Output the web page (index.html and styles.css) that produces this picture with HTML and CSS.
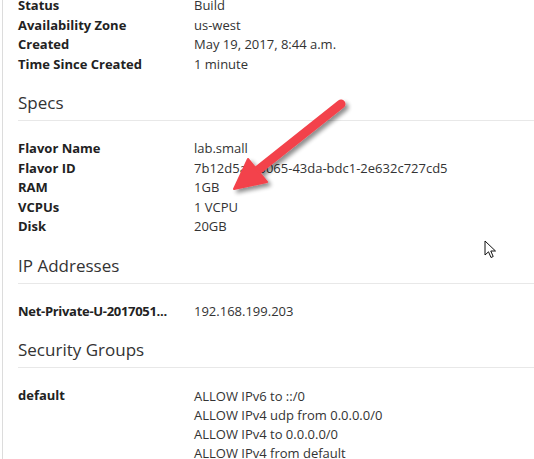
FILE: index.html
```html
<!DOCTYPE html>
<html>
<head>
<meta charset="utf-8">
<link rel="stylesheet" href="styles.css">
</head>
<body>
<div class="frame">
  <div class="page">
    <dl class="props">
      <dt>Status</dt><dd>Build</dd>
      <dt>Availability Zone</dt><dd>us-west</dd>
      <dt>Created</dt><dd>May 19, 2017, 8:44 a.m.</dd>
      <dt>Time Since Created</dt><dd>1 minute</dd>
    </dl>

    <h4 class="section-title">Specs</h4>
    <dl class="props">
      <dt>Flavor Name</dt><dd>lab.small</dd>
      <dt>Flavor ID</dt><dd>7b12d5a0-0065-43da-bdc1-2e632c727cd5</dd>
      <dt>RAM</dt><dd>1GB</dd>
      <dt>VCPUs</dt><dd>1 VCPU</dd>
      <dt>Disk</dt><dd>20GB</dd>
    </dl>

    <h4 class="section-title">IP Addresses</h4>
    <dl class="props">
      <dt class="trunc">Net-Private-U-2017051...</dt><dd>192.168.199.203</dd>
    </dl>

    <h4 class="section-title">Security Groups</h4>
    <dl class="props">
      <dt>default</dt>
      <dd>
        <ul class="rules">
          <li>ALLOW IPv6 to ::/0</li>
          <li>ALLOW IPv4 udp from 0.0.0.0/0</li>
          <li>ALLOW IPv4 to 0.0.0.0/0</li>
          <li>ALLOW IPv4 from default</li>
        </ul>
      </dd>
    </dl>
  </div>

  <svg class="arrow" width="534" height="459" viewBox="0 0 534 459">
    <defs>
      <filter id="sh" x="-20%" y="-20%" width="140%" height="140%">
        <feGaussianBlur in="SourceAlpha" stdDeviation="2.2"/>
        <feOffset dx="3" dy="3" result="b"/>
        <feComponentTransfer><feFuncA type="linear" slope="0.45"/></feComponentTransfer>
        <feMerge><feMergeNode/><feMergeNode in="SourceGraphic"/></feMerge>
      </filter>
    </defs>
    <g filter="url(#sh)" fill="#f3434b" stroke="#f3434b">
      <line x1="341" y1="104" x2="258" y2="170" stroke-width="9" stroke-linecap="round"/>
      <polygon points="248,159 267,182 234,189" stroke-width="2" stroke-linejoin="round"/>
    </g>
  </svg>

  <svg class="cursor" width="14" height="20" viewBox="0 0 14 20">
    <path d="M1 1 L1 15 L4.5 11.8 L7 17.5 L9.2 16.5 L6.8 11 L11.5 11 Z" fill="#fff" stroke="#111" stroke-width="1" stroke-linejoin="miter"/>
  </svg>
</div>
</body>
</html>
```

FILE: styles.css
```css
html, body {
  margin: 0;
  padding: 0;
  background: #fff;
}

body {
  font-family: "Open Sans", "Liberation Sans", sans-serif;
  font-size: 13px;
  color: #333;
  overflow: hidden;
}

.frame {
  position: relative;
  width: 534px;
  height: 459px;
  overflow: hidden;
}

.page {
  margin-left: 2px;
  border-left: 1px solid #dcdcdc;
  padding-left: 15px;
  margin-top: -4px;
  height: 480px;
}

.props {
  display: grid;
  grid-template-columns: 176px 1fr;
  margin: 0;
  line-height: 19.5px;
}

.props dt {
  font-weight: 700;
  color: #222;
  margin: 0;
}

.props dd {
  margin: 0;
  color: #333;
}

.props dt.trunc {
  white-space: nowrap;
  overflow: hidden;
  text-overflow: ellipsis;
  padding-right: 8px;
  letter-spacing: -0.3px;
}

.rules {
  list-style: none;
  margin: 0;
  padding: 1px 0 0 0;
  line-height: 19px;
}

.section-title {
  font-size: 17px;
  font-weight: 400;
  line-height: 20px;
  color: #333;
  margin: 19px 0 18px 0;
  padding-bottom: 7px;
  border-bottom: 1px solid #e8e8e8;
}

.arrow {
  position: absolute;
  left: 0;
  top: 0;
  pointer-events: none;
}

.cursor {
  position: absolute;
  left: 484px;
  top: 240px;
}
```
